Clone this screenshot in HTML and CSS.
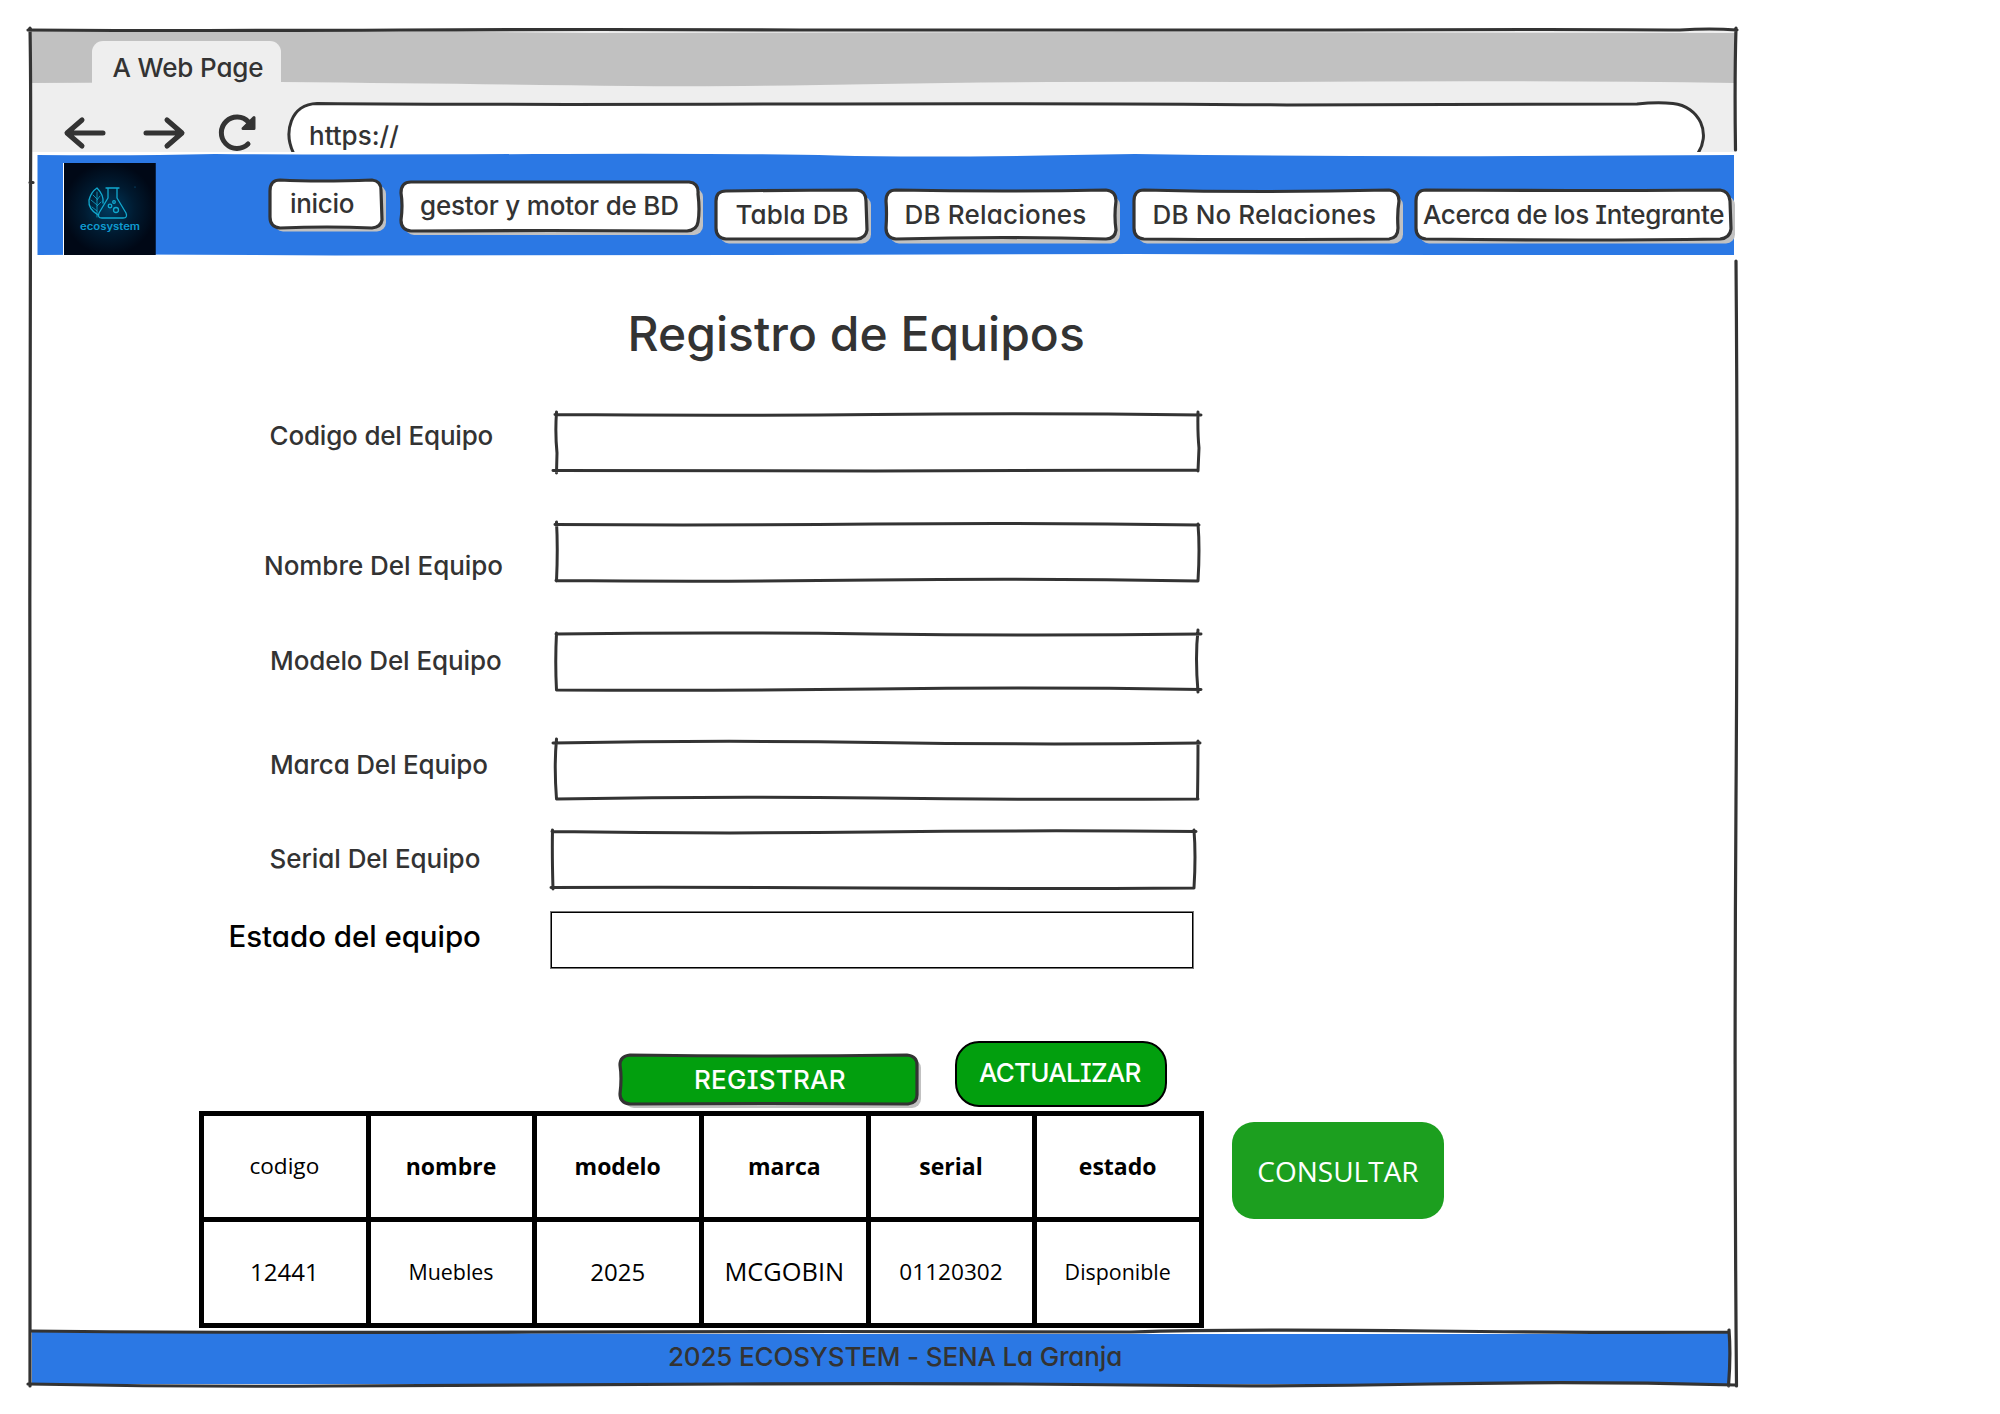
FILE: index.html
```html
<!DOCTYPE html>
<html lang="es">
<head>
<meta charset="utf-8">
<title>Registro de Equipos</title>
<link rel="stylesheet" href="styles.css">
</head>
<body>
<div class="page">
  <header class="chrome">
    <div class="tabstrip">
      <svg class="sketch" width="1704" height="54" viewBox="0 0 1704 54"><path fill="#c1c1c1" d="M0 1 Q180 2 330 1 L560 3 L1100 2 L1704 3 V53 Q1500 50 1240 52 Q1000 51 850 54 Q700 57 600 56 Q450 54 250 52 L0 53Z"/></svg>
      <div class="tab"><span class="t">A Web Page</span></div>
    </div>
    <div class="toolbar">
      <svg class="nav-icons" width="200" height="50" viewBox="0 0 200 50" fill="none" stroke="#333" stroke-width="5" stroke-linecap="round" stroke-linejoin="round">
        <path d="M43 25H8M22 12 7 25l15 13"/>
        <path d="M86 25h35M107 12l15 13-15 13"/>
        <path d="M188 36A15.700 15.700 0 1 1 188.500 14"/>
        <path d="M194 9.500v11h-11z" stroke-width="3" fill="#333"/>
      </svg>
      <div class="address">
        <svg class="sketch" width="1422" height="50" viewBox="0 0 1422 50"><path fill="#fff" stroke="#333" stroke-width="3" d="M8 54C-5 30 4 2 30 1.500Q200 3 500 2T1000 3L1350 2Q1370 0 1386 1.500C1412 4 1426 32 1409 54"/></svg>
        <span class="t">https://</span>
      </div>
    </div>
  </header>

  <nav class="menu">
    <svg class="sketch" width="1700" height="104" viewBox="0 0 1700 104"><path fill="#fff" d="M-.500 0H1704V104H0V30H-.500Z"/><path fill="#2b78e4" d="M2.500 3Q100 4 180 2Q300 3 500 2T800 3.500T1100 2Q1300 5 1500 4L1699 3V103H1400L1100 102L700 103L300 103.500L100 102.500L2.500 103Z"/></svg>
    <svg class="logo" width="93" height="92" viewBox="0 0 93 92">
      <defs><radialGradient id="glow"><stop offset="0" stop-color="#003a5e"/><stop offset=".55" stop-color="#001a30"/><stop offset="1" stop-color="#000816"/></radialGradient></defs>
      <rect width="92.500" height="92" fill="#000816"/><rect width="92.500" height="92" fill="url(#glow)"/><rect width="1" height="92" fill="#fff"/>
      <g fill="none" stroke="#11a9cf" stroke-width="1.300" stroke-linejoin="round" stroke-linecap="round">
        <path d="M43 25h13M45 26v9L36 50q-2 5 3 5h21q5 0 3-5L54 35v-9"/>
        <path d="M35 52Q25 46 26 37Q28 29 34 25Q41 32 40 40M34 29"/>
        <path stroke-width=".8" d="M34 29v25M34 36l-4-4M34 42l-6-5M34 48l-5-4M34 37l3-4M34 43l4-4"/>
        <circle cx="51" cy="39" r="1.300"/><circle cx="47" cy="43" r="1.800"/><circle cx="53" cy="47" r="2.500"/>
      </g>
      <circle cx="72" cy="24" r=".6" fill="#0b6f9c"/>
      <text class="logo-text" x="17" y="66.500" textLength="60" lengthAdjust="spacingAndGlyphs">ecosystem</text>
    </svg>
    <a class="btn b-inicio"><svg class="sketch" width="118" height="54" viewBox="0 0 118 54"><rect class="shade" x="6" y="7" width="112" height="46.500" rx="9"/><path class="edge" d="M12 2Q50 4 104 2Q113 3 113 12L114 42Q113 49 104 50Q60 48 12 50Q2 49 2 39V13Q2 2 12 2Z"/></svg><span class="t">inicio</span></a>
    <a class="btn b-gestor"><svg class="sketch" width="304" height="55" viewBox="0 0 304 55"><rect class="shade" x="6" y="8" width="298" height="47" rx="9"/><path class="edge" d="M12 2H290Q300 3 299 14Q301 30 299 42Q298 50 288 51Q150 50 12 51Q2 50 2 40Q4 25 2 13Q2 2 12 2Z"/></svg><span class="t">gestor y motor de BD</span></a>
    <a class="btn b-tabla"><svg class="sketch" width="157" height="55" viewBox="0 0 157 55"><rect class="shade" x="6" y="8" width="151" height="47.500" rx="9"/><path class="edge" d="M12 3Q80 2 143 2Q152 3 152 13L153 42Q152 50 143 51Q80 51 12 51Q2 50 2 40V13Q2 3 12 3Z"/></svg><span class="t">Tabla DB</span></a>
    <a class="btn b-rel"><svg class="sketch" width="236" height="55" viewBox="0 0 236 55"><rect class="shade" x="6" y="8" width="230" height="47.500" rx="9"/><path class="edge" d="M12 2Q120 4 222 2Q232 3 232 13Q230 28 232 42Q231 51 222 51Q120 48 12 51Q2 50 2 40Q3 25 2 13Q2 2 12 2Z"/></svg><span class="t">DB Relaciones</span></a>
    <a class="btn b-norel"><svg class="sketch" width="271" height="55" viewBox="0 0 271 55"><rect class="shade" x="6" y="8" width="265" height="47.500" rx="9"/><path class="edge" d="M12 2Q130 5 257 2Q267 3 267 13Q265 25 266 40Q266 50 257 51Q120 52 12 51Q2 50 2 40V13Q2 2 12 2Z"/></svg><span class="t">DB No Relaciones</span></a>
    <a class="btn b-acerca"><svg class="sketch" width="321" height="55" viewBox="0 0 321 55"><rect class="shade" x="6" y="8" width="315" height="47.500" rx="9"/><path class="edge" d="M12 2Q150 3 306 2Q315 3 316 13L317 41Q316 50 306 51Q170 53 12 51Q2 50 2 40V13Q2 2 12 2Z"/></svg><span class="t">Acerca de los Integrante</span></a>
  </nav>

  <main>
    <h1><span class="t">Registro de Equipos</span></h1>
    <form>
      <div class="row r1"><label><span class="t">Codigo del Equipo</span></label><div class="field"><svg class="sketch" width="644" height="57" viewBox="0 0 644 57"><path d="M0 1.500Q160 3 320 1.500T646 2M-2 57.500Q160 58 320 58T643 57M1.500 -1Q0 20 2 40L1.500 60M643 -1Q642.500 20 644 35L643 58"/></svg></div></div>
      <div class="row r2"><label><span class="t">Nombre Del Equipo</span></label><div class="field"><svg class="sketch" width="644" height="57" viewBox="0 0 644 57"><path d="M0 1.500Q160 2.500 320 1T644 2M1 57.500Q160 59 320 57T643 58M1.500 -1Q3 25 1.500 58M643 1Q645 25 643 58"/></svg></div></div>
      <div class="row r3"><label><span class="t">Modelo Del Equipo</span></label><div class="field"><svg class="sketch" width="644" height="57" viewBox="0 0 644 57"><path d="M1 2Q160 0 320 2T646 2M1.500 58Q160 59 320 57T646 57.500M1.500 1Q0 30 1.500 58M643 -2Q640 25 643 60"/></svg></div></div>
      <div class="row r4"><label><span class="t">Marca Del Equipo</span></label><div class="field"><svg class="sketch" width="644" height="57" viewBox="0 0 644 57"><path d="M-2 2Q160 -1 320 1.500T645 2M1.500 58Q160 55 320 57T643 58M1.500 -2Q-1 25 1.500 58M643 0Q643 25 642.500 58"/></svg></div></div>
      <div class="row r5"><label><span class="t">Serial Del Equipo</span></label><div class="field"><svg class="sketch" width="644" height="57" viewBox="0 0 644 57"><path d="M0 1.500Q160 4 320 2T644 1.500M-1 57.500Q160 57 320 58T642 58M.500 0Q0 25 1 59M642 0Q644 25 642 58"/></svg></div></div>
      <div class="row r6"><label><span class="t">Estado del equipo</span></label><div class="field plain"></div></div>
    </form>

    <div class="actions">
      <button type="button" class="registrar"><svg class="sketch" width="302" height="54" viewBox="0 0 302 54"><rect class="shade" x="6" y="6" width="296" height="49" rx="9"/><path class="edge" d="M11 2Q150 4 288 2Q298 3 298 12V42Q298 50 289 51Q150 50 11 51Q1 50 1 41Q3 25 1 12Q1 3 11 2Z"/></svg><span class="t">REGISTRAR</span></button>
      <button type="button" class="actualizar"><span class="t">ACTUALIZAR</span></button>
    </div>

    <div class="results">
      <div class="grid">
        <div class="s22">codigo</div><div class="s23 bold">nombre</div><div class="s23 bold">modelo</div><div class="s23 bold">marca</div><div class="s23 bold">serial</div><div class="s23 bold">estado</div>
        <div class="s24">12441</div><div class="s21">Muebles</div><div class="s24">2025</div><div class="s25">MCGOBIN</div><div class="s22">01120302</div><div class="s21">Disponible</div>
      </div>
      <button type="button" class="consultar">CONSULTAR</button>
    </div>
  </main>

  <footer>
    <svg class="sketch" width="1704" height="58" viewBox="0 0 1704 58"><path fill="#2b78e4" d="M1 2L700 4H1200L1600 4L1698 3V54H1V2Z"/><path class="line" d="M0 1Q200 3 500 2T1100 2Q1200 -1 1400 1T1697 2M-3 54Q150 57 300 56T700 54T1100 55T1400 54T1704 55M1698 0Q1700 25 1697.500 56"/></svg>
    <span class="t">2025 ECOSYSTEM - SENA La Granja</span>
  </footer>

  <svg class="frame" width="2000" height="1414" viewBox="0 0 2000 1414">
    <path class="line" d="M28 30Q200 31 400 30T800 30T1300 30T1680 30Q1710 28 1737 30M30 28Q31 80 30.500 200Q29.500 500 30 800Q29.500 1100 30 1386M1736 28Q1734.500 80 1735.500 150M1736 261Q1738 500 1736 800T1736.500 1386M30 182.500h3"/>
  </svg>
</div>
</body>
</html>
```
FILE: styles.css
```css
* { box-sizing: border-box; }
body { margin: 0; background: #fff; }
.page {
  position: relative;
  width: 2000px;
  height: 1414px;
  padding: 30px 0 0 31px;
  display: flex;
  flex-direction: column;
  font: 500 26px/1 Inter, "Open Sans", sans-serif;
  font-feature-settings: "cv11", "cv08";
  color: #333;
}
.t { white-space: pre; display: inline-block; }
.sketch { position: absolute; left: 0; top: 0; overflow: visible; }
.frame { position: absolute; left: 0; top: 0; pointer-events: none; }
.line { fill: none; stroke: #333; stroke-width: 3.2; stroke-linecap: round; }

.chrome { width: 1704px; height: 122px; background: #eee; overflow: hidden; flex: none; }
.tabstrip { position: relative; height: 53px; padding: 11px 0 0 61px; background: #eee; }
.tab { position: relative; width: 189px; height: 46px; padding: 14px 0 0 20.5px; background: #eee; border-radius: 11px 11px 0 0; letter-spacing: -.15px; }
.toolbar { display: flex; height: 69px; }
.nav-icons { margin: 25px 0 0 29px; flex: none; }
.address { position: relative; width: 1422px; height: 50px; margin: 19px 0 0 27px; padding: 21px 0 0 22px; }
.address .t { position: relative; }

.menu { position: relative; display: flex; width: 1700px; height: 103px; margin-left: 4px; flex: none; }
.logo { position: relative; margin: 11px 0 0 28px; flex: none; }
.logo-text { font: 600 10px Inter, sans-serif; fill: #0f9bd0; }
.btn { position: relative; flex: none; height: 54px; }
.btn .t { position: relative; }
.shade { fill: #c1c1c1; }
.edge { fill: #fff; stroke: #333; stroke-width: 3.2; }
.b-inicio { width: 118px; margin: 26px 0 0 112px; padding: 12.5px 0 0 22px; letter-spacing: -.3px; }
.b-gestor { width: 304px; margin: 28px 0 0 13px; padding: 13px 0 0 21px; letter-spacing: -.2px; }
.b-tabla { width: 157px; margin: 36px 0 0 11px; padding: 14px 0 0 21.5px; letter-spacing: .1px; }
.b-rel { width: 236px; margin: 36px 0 0 12.5px; padding: 14px 0 0 21px; letter-spacing: .2px; }
.b-norel { width: 271px; margin: 36px 0 0 12px; padding: 14px 0 0 21px; letter-spacing: .12px; }
.b-acerca { width: 321px; margin: 36px 0 0 11.5px; padding: 14px 0 0 9px; letter-spacing: -.37px; }

h1 { margin: 55px 0 0 596.5px; font-size: 48px; font-weight: 500; line-height: 48px; letter-spacing: .02px; }
form { margin-top: 55px; }
.row { display: flex; align-items: flex-start; }
label { display: block; width: 524px; flex: none; letter-spacing: -.1px; }
.field { position: relative; width: 644px; height: 57px; }
.field path { fill: none; stroke: #333; stroke-width: 3; stroke-linecap: round; }
.r1 { height: 109.5px; }
.r1 label { padding: 9.5px 0 0 238.5px; letter-spacing: -.18px; }
.r2 { height: 109px; }
.r2 label { padding: 30px 0 0 233px; letter-spacing: -.03px; }
.r3 { height: 109.5px; }
.r3 label { padding: 16px 0 0 239px; }
.r4 { height: 89px; }
.r4 label { padding: 10.5px 0 0 239px; letter-spacing: -.18px; }
.r5 { height: 82px; }
.r5 label { width: 520.5px; padding: 15.5px 0 0 238.5px; letter-spacing: -.06px; }
.r6 { height: 57px; }
.r6 label { width: 520px; padding: 9.5px 0 0 197.5px; font-size: 29.5px; letter-spacing: -.05px; color: #000; }
.plain { width: 642px; height: 56px; border: 1.6px solid #000; outline: .4px solid #777; }

button { border: 0; padding: 0; background: none; font: inherit; color: #fff; font-feature-settings: inherit; }
.actions { display: flex; align-items: flex-start; height: 70px; margin-top: 72px; }
.registrar { position: relative; width: 302px; height: 54px; margin: 12px 0 0 588px; padding-left: 75px; text-align: left; letter-spacing: .25px; }
.registrar .t { position: relative; }
.registrar .edge { fill: #029f0e; }
.actualizar { width: 212px; height: 66px; margin-left: 34px; padding: 0 0 3px 22px; text-align: left; letter-spacing: -.75px; background: #029f0e; border: 2px solid #000; border-radius: 24px; }

.results { display: flex; align-items: flex-start; height: 219px; font-family: "Open Sans", sans-serif; font-weight: 400; font-feature-settings: normal; color: #000; }
.grid { display: grid; grid-template-columns: repeat(6, 1fr); grid-template-rows: 1fr 1fr; gap: 5px; width: 1005px; height: 217px; margin-left: 168px; padding: 5px; background: #000; }
.grid div { display: flex; align-items: center; justify-content: center; background: #fff; padding: 0 1px 1px 0; }
.s21 { font-size: 21.4px; }
.s22 { font-size: 22.6px; }
.s23 { font-size: 23px; }
.s24 { font-size: 24px; }
.s25 { font-size: 25.4px; }
.bold { font-weight: 700; }
.consultar { width: 212px; height: 97px; margin: 11px 0 0 28px; border-radius: 22px; background: #1c9f1f; font-size: 28px; }

footer { position: relative; width: 1704px; height: 58px; padding: 14px 0 0 637px; letter-spacing: -.16px; }
footer .t { position: relative; }
```
